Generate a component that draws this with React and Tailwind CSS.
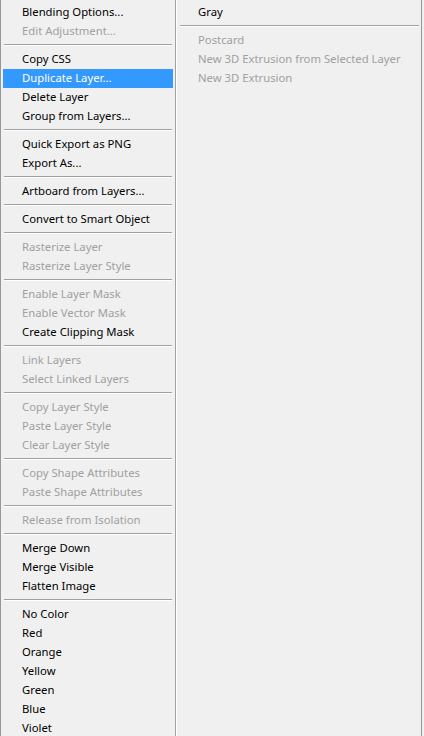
import React from 'react';

// Layer context menu: main list on the left, submenu-style column on the right
const leftGroups = [
  [['Blending Options...'], ['Edit Adjustment...', true]],
  [['Copy CSS'], ['Duplicate Layer...', false, true], ['Delete Layer'], ['Group from Layers...']],
  [['Quick Export as PNG'], ['Export As...']],
  [['Artboard from Layers...']],
  [['Convert to Smart Object']],
  [['Rasterize Layer', true], ['Rasterize Layer Style', true]],
  [['Enable Layer Mask', true], ['Enable Vector Mask', true], ['Create Clipping Mask']],
  [['Link Layers', true], ['Select Linked Layers', true]],
  [['Copy Layer Style', true], ['Paste Layer Style', true], ['Clear Layer Style', true]],
  [['Copy Shape Attributes', true], ['Paste Shape Attributes', true]],
  [['Release from Isolation', true]],
  [['Merge Down'], ['Merge Visible'], ['Flatten Image']],
  [['No Color'], ['Red'], ['Orange'], ['Yellow'], ['Green'], ['Blue'], ['Violet']],
];

const rightGroups = [
  [['Gray']],
  [['Postcard', true], ['New 3D Extrusion from Selected Layer', true], ['New 3D Extrusion', true]],
];

function Item({ label, disabled, active }) {
  return (
    <div
      className={`h-[19px] leading-[18px] pl-[19px] whitespace-nowrap ${
        active ? 'bg-[#3399ff] text-white' : disabled ? 'text-[#a0a0a0]' : 'text-black'
      }`}
    >
      {label}
    </div>
  );
}

function Separator() {
  return (
    <div className="h-[9px] pt-[3px] px-[1px]">
      <div className="border-t border-[#a0a0a0] border-b border-b-white" />
    </div>
  );
}

function Column({ groups }) {
  return groups.map((group, i) => (
    <React.Fragment key={i}>
      {i > 0 && <Separator />}
      {group.map(([label, disabled, active]) => (
        <Item key={label} label={label} disabled={disabled} active={active} />
      ))}
    </React.Fragment>
  ));
}

export default function App() {
  return (
    <div
      className="flex w-[424px] h-[736px] overflow-hidden bg-[#f0f0f0] text-[11.3px]"
      style={{ fontFamily: '"Noto Sans", "Open Sans", sans-serif' }}
    >
      <div className="w-[176px] shrink-0 border-l border-[#979797] border-r border-r-[#a0a0a0] pt-[3px] px-[2px]">
        <Column groups={leftGroups} />
      </div>
      <div className="flex-1 border-l border-white pt-[3px] pl-[2px] pr-[1px]">
        <Column groups={rightGroups} />
      </div>
      <div className="w-[3px] shrink-0 border-l border-[#979797] bg-[#f0f0f0]" />
    </div>
  );
}
